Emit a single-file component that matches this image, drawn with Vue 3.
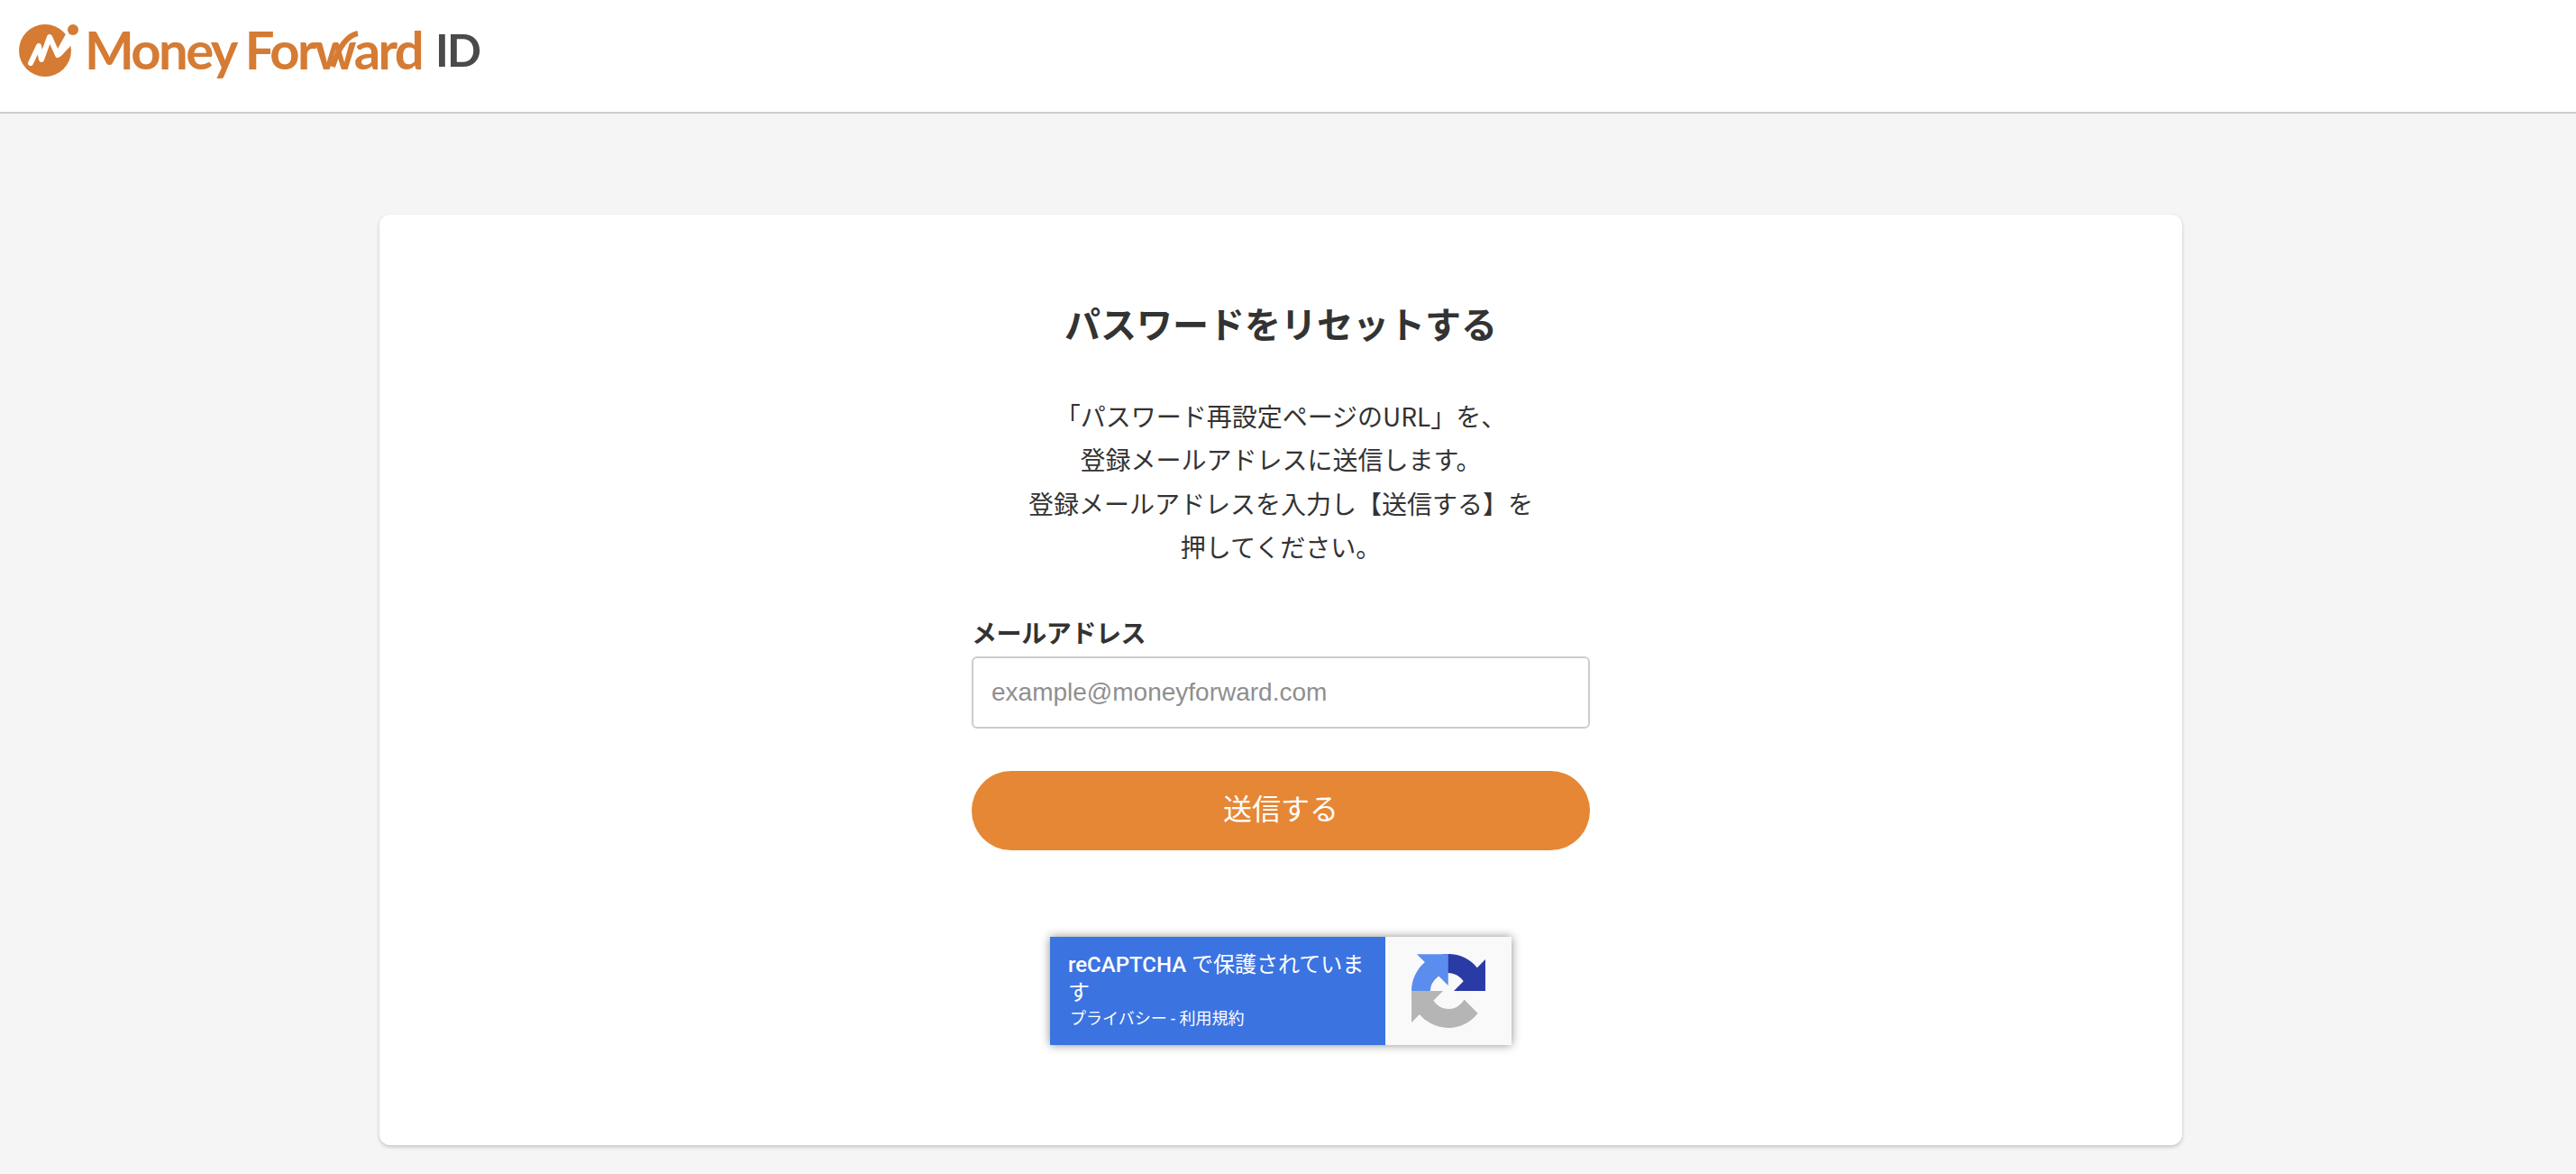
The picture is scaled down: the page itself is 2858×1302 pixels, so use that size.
<template>
  <div class="page">
    <header class="header">
      <a class="logo" href="#">
        <svg class="logo-mark" viewBox="0 0 70 70" width="70" height="70">
          <circle cx="30" cy="36" r="29" fill="#d57b33" />
          <path d="M14 50 L23 31 L26 46 L35 21 L44 41 L58 26" fill="none" stroke="#fff" stroke-width="6" stroke-linecap="round" stroke-linejoin="round" />
          <path d="M44 34 L54 16 L68 20 L62 27 L47 43 Z" fill="#fff" />
          <circle cx="61" cy="13" r="6" fill="#d57b33" />
        </svg>
        <span class="logo-name">Money Forward</span>
        <span class="logo-id">ID</span>
        <svg class="logo-swoosh" viewBox="0 0 50 50" width="50" height="50">
          <path d="M11 44 C16 28 24 10 39 7" fill="none" stroke="#d57b33" stroke-width="6" />
        </svg>
      </a>
    </header>

    <main class="main">
      <section class="card">
        <h1 class="title">パスワードをリセットする</h1>
        <p class="lead">
          「パスワード再設定ページのURL」を、<br />
          登録メールアドレスに送信します。<br />
          登録メールアドレスを入力し【送信する】を<br />
          押してください。
        </p>

        <form class="form" @submit.prevent>
          <label class="label" for="email">メールアドレス</label>
          <input id="email" v-model="email" class="input" type="email" placeholder="example@moneyforward.com" />
          <button class="submit" type="submit">送信する</button>
        </form>

        <div class="recaptcha">
          <div class="recaptcha-text">
            <div class="recaptcha-title"><span class="recaptcha-name">reCAPTCHA</span> で保護されています</div>
            <div class="recaptcha-links">プライバシー - 利用規約</div>
          </div>
          <div class="recaptcha-icon">
            <svg viewBox="0 0 64 64" width="82" height="82">
              <path fill="#2a3ba6" d="M64 31.955l-.033-1.37V4.687l-7.16 7.16C50.948 4.674 42.033.093 32.05.093c-10.4 0-19.622 4.96-25.458 12.64l11.736 11.86a15.55 15.55 0 0 1 4.753-5.333c2.05-1.6 4.952-2.906 8.968-2.906.485 0 .86.057 1.135.163 4.976.393 9.29 3.14 11.83 7.125l-8.307 8.307c10.522-.04 22.4-.066 27.295.005" />
              <path fill="#5b8def" d="M31.862.094l-1.37.033H4.594l7.16 7.16C4.58 13.147 0 22.06 0 32.046c0 10.4 4.96 19.622 12.64 25.458l11.86-11.736a15.55 15.55 0 0 1-5.333-4.753c-1.6-2.05-2.906-4.952-2.906-8.968 0-.485.057-.86.163-1.135.393-4.976 3.14-9.29 7.125-11.83l8.307 8.307c-.04-10.522-.066-22.4.005-27.295" />
              <path fill="#b5b5b5" d="M.001 32.045l.033 1.37v25.898l7.16-7.16C13.053 59.326 21.968 63.907 31.95 63.907c10.4 0 19.622-4.96 25.458-12.64l-11.736-11.86a15.55 15.55 0 0 1-4.753 5.333c-2.05 1.6-4.952 2.906-8.968 2.906-.485 0-.86-.057-1.135-.163-4.976-.393-9.29-3.14-11.83-7.125l8.307-8.307c-10.522.04-22.4.066-27.295-.005" />
            </svg>
          </div>
        </div>
      </section>
    </main>
  </div>
</template>

<script setup>
import { ref } from 'vue'

const email = ref('')
</script>

<style>
html,
body {
  margin: 0;
  background: #f5f5f5;
}
</style>

<style scoped>
.page {
  min-height: 1302px;
  background: #f5f5f5;
  color: #333;
  font-family: "Liberation Sans", "Noto Sans CJK JP", sans-serif;
}

.header {
  height: 126px;
  box-sizing: border-box;
  display: flex;
  align-items: center;
  padding-left: 20px;
  background: #fff;
  border-bottom: 2px solid #ccc;
}

.logo {
  position: relative;
  display: flex;
  align-items: center;
  text-decoration: none;
  margin-top: -14px;
}

.logo-name {
  margin-left: 4px;
  color: #d57b33;
  font-family: Lato, sans-serif;
  font-size: 58px;
  font-weight: 700;
  letter-spacing: -2.6px;
  line-height: 1;
}

.logo-id {
  margin-left: 15px;
  color: #4a4a4a;
  font-family: Lato, sans-serif;
  font-size: 50px;
  font-weight: 700;
  letter-spacing: -2px;
  line-height: 1;
}

.logo-swoosh {
  position: absolute;
  left: 338px;
  top: 10px;
}

.main {
  display: flex;
  justify-content: center;
  padding: 112px 16px 32px 0;
}

.card {
  width: 2000px;
  height: 1032px;
  box-sizing: border-box;
  padding-top: 88px;
  display: flex;
  flex-direction: column;
  align-items: center;
  background: #fff;
  border-radius: 12px;
  box-shadow: 0 2px 4px rgba(0, 0, 0, 0.2);
}

.title {
  margin: 0;
  font-family: "Noto Sans CJK JP", sans-serif;
  font-size: 40px;
  font-weight: 700;
  line-height: 64px;
}

.lead {
  margin: 47px 0 0;
  font-family: "Noto Sans CJK JP", sans-serif;
  font-size: 28px;
  line-height: 48.4px;
  text-align: center;
}

.form {
  width: 686px;
  margin-top: 50px;
  display: flex;
  flex-direction: column;
}

.label {
  font-family: "Noto Sans CJK JP", sans-serif;
  font-size: 28px;
  font-weight: 700;
  letter-spacing: -0.4px;
  line-height: 40px;
  margin-bottom: 7px;
}

.input {
  height: 80px;
  box-sizing: border-box;
  padding: 0 20px;
  border: 2px solid #ccc;
  border-radius: 6px;
  background: #fff;
  font-family: "Liberation Sans", sans-serif;
  font-size: 28px;
  color: #333;
  outline: none;
}

.input::placeholder {
  color: #8f8f8f;
  opacity: 1;
}

.submit {
  height: 88px;
  margin-top: 47px;
  padding: 0 0 8px;
  border: 0;
  border-radius: 44px;
  background: #e68735;
  color: #fff;
  font-family: "Noto Sans CJK JP", sans-serif;
  font-size: 32px;
  cursor: pointer;
}

.recaptcha {
  width: 512px;
  height: 120px;
  margin-top: 96px;
  display: flex;
  box-shadow: 0 0 10px rgba(0, 0, 0, 0.45);
}

.recaptcha-text {
  width: 372px;
  box-sizing: border-box;
  padding: 16px 20px 0;
  background: #3b73e1;
  color: #fff;
  font-family: Roboto, "Noto Sans CJK JP", sans-serif;
}

.recaptcha-title {
  font-size: 24px;
  line-height: 31px;
}

.recaptcha-name {
  font-weight: 500;
}

.recaptcha-links {
  margin-left: 2px;
  font-size: 18px;
  line-height: 26px;
}

.recaptcha-icon {
  flex: 1;
  display: flex;
  align-items: center;
  justify-content: center;
  background: #f9f9f9;
}
</style>
